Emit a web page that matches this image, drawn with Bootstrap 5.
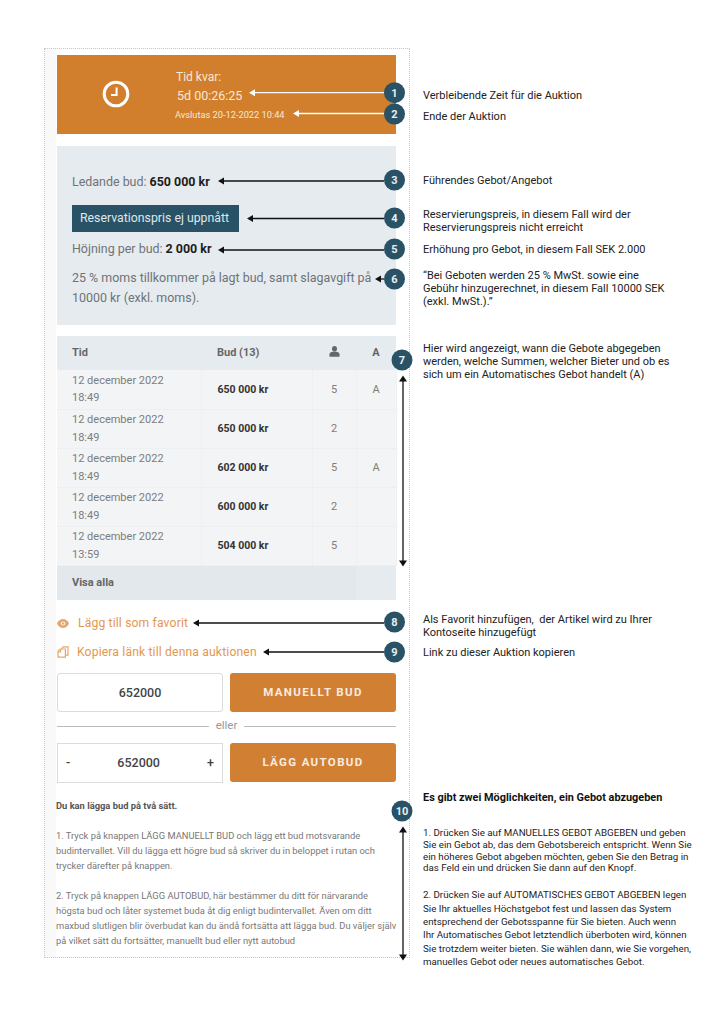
<!DOCTYPE html>
<html lang="sv">
<head>
<meta charset="utf-8">
<title>Auktion</title>
<link href="https://cdn.jsdelivr.net/npm/bootstrap@5.3.0/dist/css/bootstrap.min.css" rel="stylesheet">
<style>
html,body{background:#fff;margin:0}
body{font-family:Roboto,"Liberation Sans",sans-serif;color:#777;width:724px;height:1024px;overflow:hidden;position:relative}
.sheet{padding:48px 0 0 44px}
.panel{width:366px;height:910px;flex:none;border:1px dotted #c9c9c9;background:#f9f9f9}
.inner{margin-left:11px;height:100%;background:#fff;padding:6px 13px 0 1px}
.timer{height:79px;background:#d17f2c;color:#f7e7d6}
.clockcell{width:119px;flex:none;padding-left:45px;padding-bottom:1px}
.t1{font-size:12px;line-height:16px;margin-top:14px}
.t2{font-size:12.5px;line-height:20px;margin:1px 0 0 1px}
.t3{font-size:9.25px;line-height:14px;margin:2px 0 0 -1px}
.infobox{height:179px;margin-top:12px;background:#e6ebf0;padding:27px 15px 0;font-size:12.45px;color:#6f7375}
.infobox b{color:#1d1d1d}
.infobox p{margin:0}
.resbadge{display:inline-block;background:#2a5266;color:#dfe8ec;font-size:12.3px;line-height:27px;padding:0 8px;width:167px;margin:13px 0 8px;white-space:nowrap}
.vat{line-height:20px;margin-top:10px!important}
.bids{margin:11px 0 0;width:339px;table-layout:fixed;font-size:11px;--bs-table-bg:transparent;--bs-table-color:#7d7d7d}
.bids th,.bids td{padding:0;vertical-align:middle;border-bottom:1px solid #edf0f2;line-height:17.5px}
.bids thead th{height:34px;background:#e6ebf0;color:#666;font-weight:700;border:0}
.bids thead svg{display:block;margin:-4px auto 0}
.bids tbody td{height:39px;background:#f2f4f6;border-right:1px solid #edf0f2}
.bids td.who,.bids th.who,.bids td.auto,.bids th.auto{text-align:center}
.bids .first{padding-left:15px}
.bids .amt{padding-left:16px;color:#333;font-weight:700;font-size:10.5px}
.bids thead .amt{font-size:11px;color:#666}
.bids tfoot td{height:35px;background:#e3e8ed;border:0;color:#666;font-weight:700}
.bids tfoot td.endcap{background:#e6ebf0}
.favlink{display:flex;align-items:center;color:#e2984f;font-size:12.15px;line-height:18px;letter-spacing:.15px;text-decoration:none}
.fav1{margin-top:14px;gap:9px}
.fav2{margin-top:11px;gap:8px}
.bidrow{display:flex;gap:7px}
.bidinput{width:166px;height:39px;flex:none;border:1px solid #dcdcdc;border-radius:3px;text-align:center;font-size:12.5px;font-weight:500;color:#444;padding:0;box-shadow:none}
.bidbtn{width:166px;flex:none;height:39px;background:#d17f33;border:0;border-radius:3px;color:#f8ece0;font-size:11.5px;font-weight:700;letter-spacing:1.35px;padding:0}
.bidbtn:hover{background:#d17f33;color:#f8ece0}
.orline{display:flex;align-items:center;gap:7px;height:31px;padding-bottom:3px;color:#999;font-size:11.5px}
.orline i{flex:1;height:1px;background:#bbb}
.stepper{width:166px;height:40px;flex:none;border:1px solid #dcdcdc;justify-content:space-between;padding:0 8px;font-size:12.5px;font-weight:500;color:#444}
.helptext{font-size:9.35px;line-height:15px;color:#777;margin:15px -10px 0 -1px;white-space:nowrap}
.helptext b{color:#555}
.helptext p{margin:0 0 15px}
.notes{margin-left:13px;width:280px;font-size:11px;color:#222;line-height:13.3px}
.notes p{margin:0}
.n1{margin-top:41px!important}.n2{margin-top:8px!important}.n3{margin-top:50px!important}.n4{margin-top:21px!important}
.n5{margin-top:9px!important}.n6{margin-top:12px!important}.n7{margin-top:33px!important}.n8{margin-top:231px!important}
.n9{margin-top:7px!important}.n10{margin-top:132px!important;font-weight:700;font-size:10.9px;color:#111}
.n11{margin-top:22px!important;font-size:9.75px;line-height:11.9px}
.n12{margin-top:14px!important;font-size:9.75px;line-height:13.3px}
.overlay{position:absolute;left:0;top:0;width:724px;height:1024px;pointer-events:none}
.overlay text{font-family:Roboto,"Liberation Sans",sans-serif;font-size:11px;font-weight:700;fill:#e8eff2;text-anchor:middle}
</style>
</head>
<body>
<div class="sheet d-flex">
  <div class="panel">
    <div class="inner">
      <div class="timer d-flex">
        <div class="clockcell d-flex align-items-center">
          <svg width="28" height="28" viewBox="0 0 28 28"><circle cx="14" cy="14" r="11.8" fill="none" stroke="#fff" stroke-width="3"/><path d="M14.6 7.5V15H9" fill="none" stroke="#fff" stroke-width="2"/></svg>
        </div>
        <div>
          <div class="t1">Tid kvar:</div>
          <div class="t2">5d 00:26:25</div>
          <div class="t3">Avslutas 20-12-2022 10:44</div>
        </div>
      </div>
      <div class="infobox">
        <p>Ledande bud: <b>650 000 kr</b></p>
        <span class="resbadge">Reservationspris ej uppnått</span>
        <p>Höjning per bud: <b>2 000 kr</b></p>
        <p class="vat">25 % moms tillkommer på lagt bud, samt slagavgift på<br>10000 kr (exkl. moms).</p>
      </div>
      <table class="table bids">
        <colgroup><col style="width:144px"><col style="width:111px"><col style="width:44px"><col style="width:40px"></colgroup>
        <thead>
          <tr><th class="first">Tid</th><th class="amt">Bud (13)</th><th class="who"><svg width="11" height="11" viewBox="0 0 11 11"><ellipse cx="5.5" cy="2.8" rx="2.5" ry="2.8" fill="#666"/><path d="M.5 10.8V8.200C.5 6.800 2 6.200 3.800 5.800h3.400C9 6.200 10.500 6.800 10.500 8.200v2.600z" fill="#666"/></svg></th><th class="auto">A</th></tr>
        </thead>
        <tbody>
          <tr><td class="first">12 december 2022<br>18:49</td><td class="amt">650 000 kr</td><td class="who">5</td><td class="auto">A</td></tr>
          <tr><td class="first">12 december 2022<br>18:49</td><td class="amt">650 000 kr</td><td class="who">2</td><td class="auto"></td></tr>
          <tr><td class="first">12 december 2022<br>18:49</td><td class="amt">602 000 kr</td><td class="who">5</td><td class="auto">A</td></tr>
          <tr><td class="first">12 december 2022<br>18:49</td><td class="amt">600 000 kr</td><td class="who">2</td><td class="auto"></td></tr>
          <tr><td class="first">12 december 2022<br>13:59</td><td class="amt">504 000 kr</td><td class="who">5</td><td class="auto"></td></tr>
        </tbody>
        <tfoot><tr><td class="first" colspan="3">Visa alla</td><td class="endcap"></td></tr></tfoot>
      </table>
      <a class="favlink fav1" href="#">
        <svg width="12" height="9" viewBox="0 0 12 9"><path d="M6 0C3.400 0 1.200 1.700 0 4.500 1.200 7.300 3.400 9 6 9s4.800-1.700 6-4.500C10.800 1.700 8.600 0 6 0z" fill="#e6a76c"/><circle cx="6" cy="4.500" r="2.100" fill="#fff"/><circle cx="6" cy="4.500" r="1.200" fill="#e6a76c"/></svg>
        <span>Lägg till som favorit</span>
      </a>
      <a class="favlink fav2" href="#">
        <svg width="12" height="12" viewBox="0 0 12 12" fill="none" stroke="#e6a76c" stroke-width="1.200"><path d="M4.500 3 6 .8h5v8.400H8.400"/><path d="M1 5 3.500 3H8.400v8.200H1z"/><path d="M3.500 3.200V6H1"/></svg>
        <span>Kopiera länk till denna auktionen</span>
      </a>
      <div class="bidrow mt-2 pt-1">
        <input class="form-control bidinput" type="text" value="652000" aria-label="Manuellt bud">
        <button class="btn bidbtn" type="button">MANUELLT BUD</button>
      </div>
      <div class="orline"><i></i><span>eller</span><i></i></div>
      <div class="bidrow">
        <div class="stepper d-flex align-items-center"><span>-</span><span>652000</span><span>+</span></div>
        <button class="btn bidbtn" type="button">LÄGG AUTOBUD</button>
      </div>
      <div class="helptext">
        <p><b>Du kan lägga bud på två sätt.</b></p>
        <p>1. Tryck på knappen LÄGG MANUELLT BUD och lägg ett bud motsvarande<br>budintervallet. Vill du lägga ett högre bud så skriver du in beloppet i rutan och<br>trycker därefter på knappen.</p>
        <p>2. Tryck på knappen LÄGG AUTOBUD, här bestämmer du ditt för närvarande<br>högsta bud och låter systemet buda åt dig enligt budintervallet. Även om ditt<br>maxbud slutligen blir överbudat kan du ändå fortsätta att lägga bud. Du väljer själv<br>på vilket sätt du fortsätter, manuellt bud eller nytt autobud</p>
      </div>
    </div>
  </div>
  <div class="notes">
    <p class="n1">Verbleibende Zeit für die Auktion</p>
    <p class="n2">Ende der Auktion</p>
    <p class="n3">Führendes Gebot/Angebot</p>
    <p class="n4">Reservierungspreis, in diesem Fall wird der<br>Reservierungspreis nicht erreicht</p>
    <p class="n5">Erhöhung pro Gebot, in diesem Fall SEK 2.000</p>
    <p class="n6">“Bei Geboten werden 25 % MwSt. sowie eine<br>Gebühr hinzugerechnet, in diesem Fall 10000 SEK<br>(exkl. MwSt.).”</p>
    <p class="n7">Hier wird angezeigt, wann die Gebote abgegeben<br>werden, welche Summen, welcher Bieter und ob es<br>sich um ein Automatisches Gebot handelt (A)</p>
    <p class="n8">Als Favorit hinzufügen,&nbsp; der Artikel wird zu Ihrer<br>Kontoseite hinzugefügt</p>
    <p class="n9">Link zu dieser Auktion kopieren</p>
    <p class="n10">Es gibt zwei Möglichkeiten, ein Gebot abzugeben</p>
    <p class="n11">1. Drücken Sie auf MANUELLES GEBOT ABGEBEN und geben<br>Sie ein Gebot ab, das dem Gebotsbereich entspricht. Wenn Sie<br>ein höheres Gebot abgeben möchten, geben Sie den Betrag in<br>das Feld ein und drücken Sie dann auf den Knopf.</p>
    <p class="n12">2. Drücken Sie auf AUTOMATISCHES GEBOT ABGEBEN legen<br>Sie Ihr aktuelles Höchstgebot fest und lassen das System<br>entsprechend der Gebotsspanne für Sie bieten. Auch wenn<br>Ihr Automatisches Gebot letztendlich überboten wird, können<br>Sie trotzdem weiter bieten. Sie wählen dann, wie Sie vorgehen,<br>manuelles Gebot oder neues automatisches Gebot.</p>
  </div>
</div>
<svg class="overlay" viewBox="0 0 724 1024">
  <g stroke="#fff" stroke-width="1.300" fill="#fff">
    <path d="M384 92.700H252"/><path d="M249 92.700l6-3.500v7z" stroke="none"/>
    <path d="M384 113.500H296"/><path d="M293 113.500l6-3.500v7z" stroke="none"/>
  </g>
  <g stroke="#111" stroke-width="1.300" fill="#111">
    <path d="M384 181H221"/><path d="M218 181l6-3.500v7z" stroke="none"/>
    <path d="M384 218.500H250"/><path d="M247 218.500l6-3.500v7z" stroke="none"/>
    <path d="M384 250H221"/><path d="M218 250l6-3.500v7z" stroke="none"/>
    <path d="M384 279H378"/><path d="M375 279l6-3.500v7z" stroke="none"/>
    <path d="M384 623H196"/><path d="M193 623l6-3.500v7z" stroke="none"/>
    <path d="M384 652H266"/><path d="M263 652l6-3.500v7z" stroke="none"/>
    <path d="M403 378V564"/><path d="M403 375.500l-4 6h8z M403 566.500l-4-6h8z" stroke="none"/>
    <path d="M403 829V958"/><path d="M403 826.500l-4 6h8z M403 960.500l-4-6h8z" stroke="none"/>
  </g>
  <g fill="#2a5266">
    <circle cx="394.500" cy="92.700" r="10.500"/><circle cx="394.500" cy="114" r="10.500"/><circle cx="394.500" cy="180" r="10.500"/>
    <circle cx="394.500" cy="218" r="10.500"/><circle cx="394.500" cy="249" r="10.500"/><circle cx="394.500" cy="279" r="10.500"/>
    <circle cx="402" cy="360" r="10.500"/><circle cx="394.500" cy="622" r="10.500"/><circle cx="394.500" cy="652" r="10.500"/><circle cx="402" cy="811" r="10.500"/>
  </g>
  <text x="394.500" y="96.700">1</text><text x="394.500" y="118">2</text><text x="394.500" y="184">3</text>
  <text x="394.500" y="222">4</text><text x="394.500" y="253">5</text><text x="394.500" y="283">6</text>
  <text x="402" y="364">7</text><text x="394.500" y="626">8</text><text x="394.500" y="656">9</text><text x="402" y="815">10</text>
</svg>
<script src="https://cdn.jsdelivr.net/npm/bootstrap@5.3.0/dist/js/bootstrap.bundle.min.js"></script>
</body>
</html>
